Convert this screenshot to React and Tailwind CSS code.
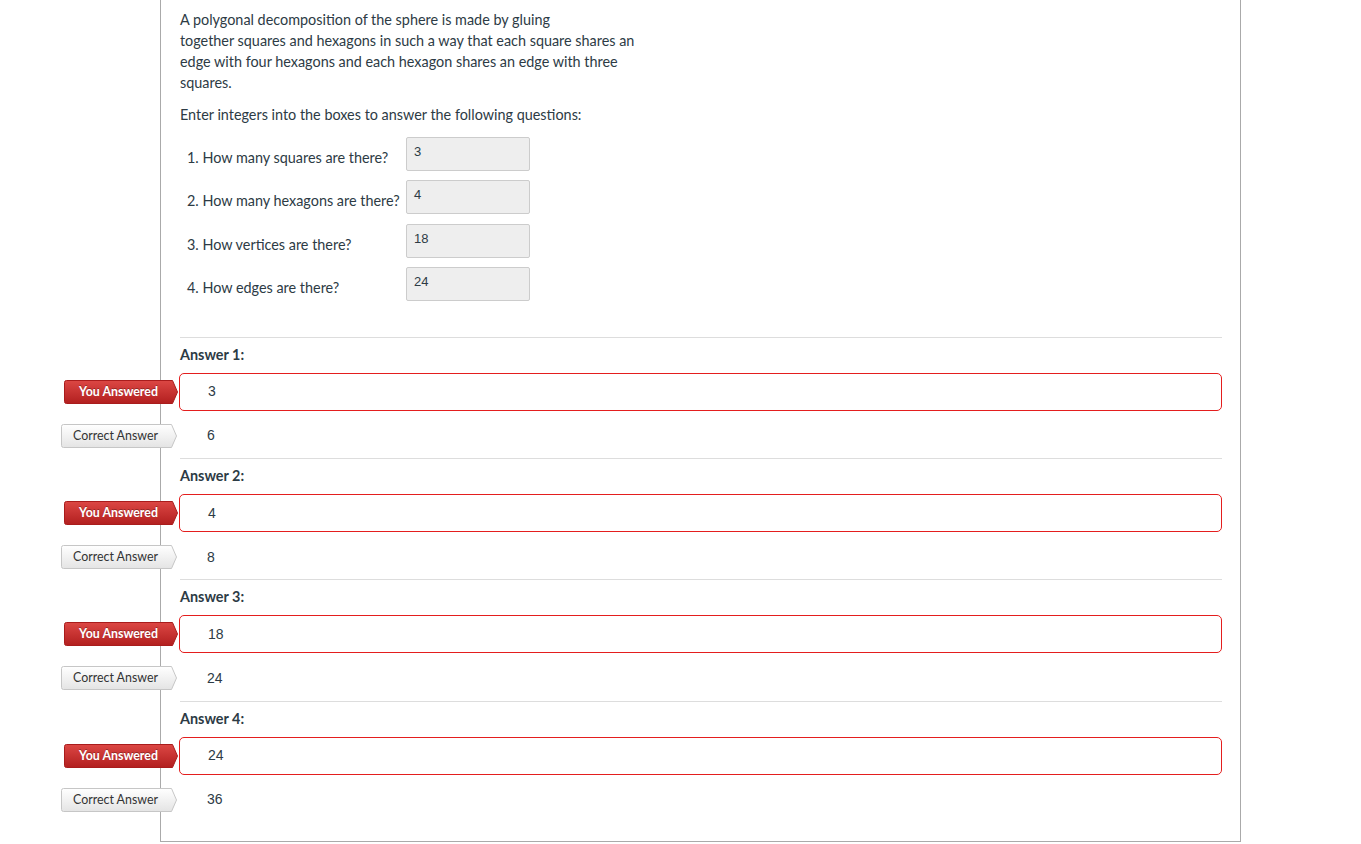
import React from 'react';

const questions = [
  { label: '1. How many squares are there?', value: '3' },
  { label: '2. How many hexagons are there?', value: '4' },
  { label: '3. How vertices are there?', value: '18' },
  { label: '4. How edges are there?', value: '24' },
];

const answers = [
  { title: 'Answer 1:', given: '3', correct: '6' },
  { title: 'Answer 2:', given: '4', correct: '8' },
  { title: 'Answer 3:', given: '18', correct: '24' },
  { title: 'Answer 4:', given: '24', correct: '36' },
];

const Badge = ({ red, children }) => {
  const w = red ? 114 : 116;
  const id = red ? 'gRed' : 'gGray';
  return (
    <div
      className={`absolute top-1/2 -translate-y-1/2 right-[calc(100%+2px)] h-[24px] z-10 flex items-center font-['Lato',sans-serif] ${
        red ? 'w-[114px]' : 'w-[116px]'
      }`}
    >
      <svg className="absolute inset-0" width={w} height="24" viewBox={`0 0 ${w} 24`}>
        <defs>
          <linearGradient id={id} x1="0" y1="0" x2="0" y2="1">
            {red ? (
              <>
                <stop offset="0" stopColor="#dc4744" />
                <stop offset="1" stopColor="#b21f1f" />
              </>
            ) : (
              <>
                <stop offset="0" stopColor="#ffffff" />
                <stop offset="1" stopColor="#e4e4e4" />
              </>
            )}
          </linearGradient>
        </defs>
        <path
          d={`M2.5 .5 H${w - 5.5} L${w - 0.5} 12 L${w - 5.5} 23.5 H2.5 Q.5 23.5 .5 21.5 V2.5 Q.5 .5 2.5 .5 Z`}
          fill={`url(#${id})`}
          stroke={red ? '#a91c1c' : '#c6c6c6'}
        />
      </svg>
      <span
        className={`relative w-[109px] text-center text-[12.4px] leading-none ${
          red ? 'text-white font-bold [text-shadow:0_-1px_0_rgba(0,0,0,0.3)]' : 'text-[#333]'
        }`}
      >
        {children}
      </span>
    </div>
  );
};

export default function App() {
  return (
    <div className="min-h-screen bg-white font-['Lato','Open_Sans',sans-serif] text-[#2d3b45]">
      <div className="ml-[160px] w-[1081px] h-[842px] border-l border-r border-b border-[#aaaaaa] pl-[19px] pr-[18px] pt-[9px]">
        <p className="text-[14.4px] leading-[21px]">
          A polygonal decomposition of the sphere is made by gluing
          <br />
          together squares and hexagons in such a way that each square shares an
          <br />
          edge with four hexagons and each hexagon shares an edge with three
          <br />
          squares.
        </p>
        <p className="mt-[11px] text-[14.4px] leading-[21px]">
          Enter integers into the boxes to answer the following questions:
        </p>

        <div className="mt-[12px] flex flex-col gap-[9.3px] pl-[7px]">
          {questions.map((q) => (
            <div key={q.label} className="flex items-start">
              <div className="w-[219px] pt-[10px] text-[14.4px] leading-[21px]">{q.label}</div>
              <div className="w-[124px] h-[34px] bg-[#eeeeee] border border-[#cccccc] rounded-[2px] px-[7px] pt-[7px] text-[13px] leading-[14px] font-['Liberation_Sans',Arial,sans-serif] text-[#2d3b45]">
                {q.value}
              </div>
            </div>
          ))}
        </div>

        <div className="mt-[36px]">
          {answers.map((a) => (
            <div key={a.title} className="border-t border-[#dddddd] pt-[7px] pb-[3.3px]">
              <div className="h-[20px] text-[14.4px] leading-[20px] font-bold">{a.title}</div>
              <div className="relative -ml-px mt-[8px] h-[38px] border border-[#e41e1e] rounded-[5px] flex items-center pl-[28px] text-[14px] font-['Liberation_Sans',Arial,sans-serif]">
                <Badge red>You Answered</Badge>
                {a.given}
              </div>
              <div className="relative -ml-px mt-[6px] h-[38px] flex items-center pl-[28px] text-[14px] font-['Liberation_Sans',Arial,sans-serif]">
                <Badge>Correct Answer</Badge>
                {a.correct}
              </div>
            </div>
          ))}
        </div>
      </div>
    </div>
  );
}
